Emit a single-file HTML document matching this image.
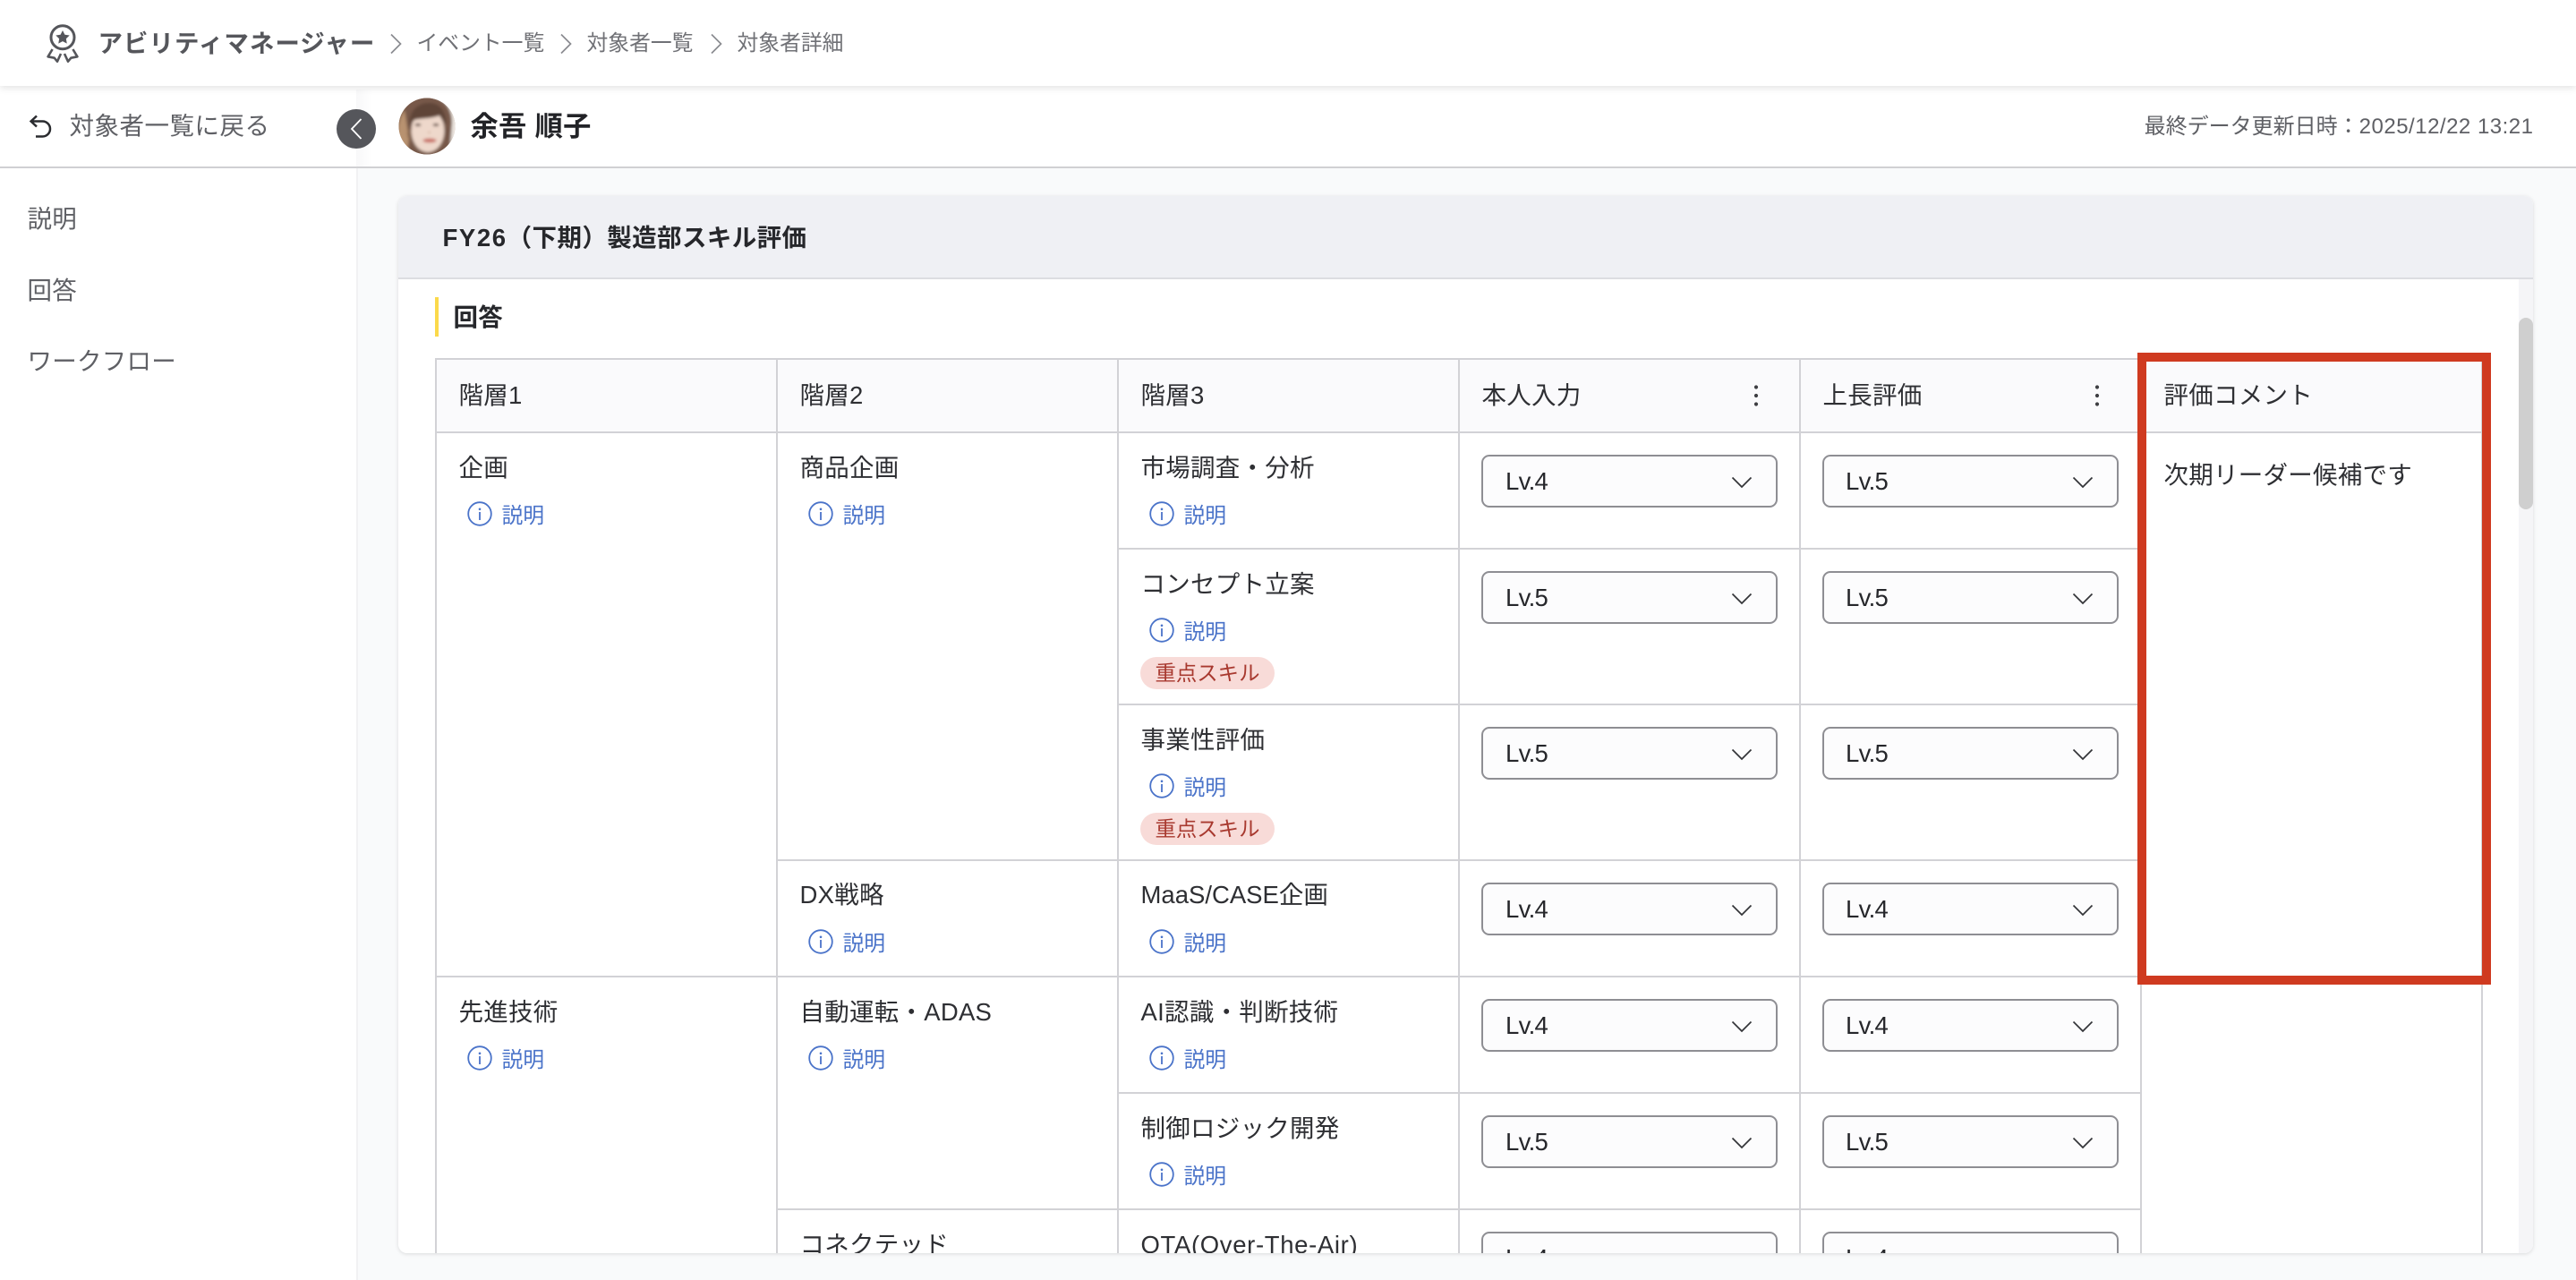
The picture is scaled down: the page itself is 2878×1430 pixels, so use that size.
<!DOCTYPE html>
<html lang="ja">
<head>
<meta charset="utf-8">
<title>対象者詳細</title>
<style>
*{box-sizing:border-box}
html,body{margin:0;padding:0}
body{width:2878px;height:1430px;overflow:hidden;position:relative;background:#f9fafb;font-family:"Liberation Sans","Noto Sans CJK JP",sans-serif;color:#2b2c30}
.t{position:absolute;white-space:nowrap;line-height:40px;height:40px;font-size:27.5px;letter-spacing:.25px;margin-left:-.5px;color:#2e2f33}
.g{color:#5f6065}
.b{font-weight:700}
.c{font-size:23.8px;letter-spacing:0;color:#707176}
.a{position:absolute}
.h{position:absolute;height:2px;background:#d2d2d6}
.v{position:absolute;width:2px;background:#d2d2d6}
.d{font-size:23.8px;letter-spacing:0;color:#4a73c9}
.tag{position:absolute;width:150px;height:36px;border-radius:18px;background:#f8dbd8;color:#a8392f;font-size:23.4px;line-height:36px;text-align:center;white-space:nowrap}
.sel{position:absolute;width:331px;height:59px;border:2px solid #8e8e93;border-radius:9px;background:#fcfcfd;font-size:27.5px;letter-spacing:-.7px;line-height:55px;padding-left:25px;color:#26272b}
.sel.r{padding-left:24px}
.sel svg{position:absolute;left:277px;top:22px}
svg{display:block}
</style>
</head>
<body>
<svg width="0" height="0" style="position:absolute">
<symbol id="i" viewBox="0 0 28 28"><circle cx="14" cy="14" r="12.8" fill="none" stroke="#4a73c9" stroke-width="1.8"/><circle cx="14" cy="8.8" r="1.3" fill="#4a73c9"/><rect x="13.1" y="12" width="1.8" height="9" fill="#4a73c9"/></symbol>
<symbol id="dn" viewBox="0 0 24 14"><path d="M1.5 1.5 L12 12 L22.5 1.5" fill="none" stroke="#333438" stroke-width="1.7"/></symbol>
<symbol id="k" viewBox="0 0 8 26"><circle cx="4" cy="3.5" r="2.1" fill="#3d3e42"/><circle cx="4" cy="13" r="2.1" fill="#3d3e42"/><circle cx="4" cy="22.5" r="2.1" fill="#3d3e42"/></symbol>
<symbol id="cv" viewBox="0 0 14 24"><path d="M2 1.5 L12.5 12 L2 22.5" fill="none" stroke="#8a8b90" stroke-width="1.7"/></symbol>
</svg>

<!-- sidebar -->
<div class="a" style="left:0;top:188px;width:400px;height:1242px;background:#fff;border-right:2px solid #f1f1f3"></div>
<div class="t g" style="left:31px;top:225px">説明</div>
<div class="t g" style="left:31px;top:305px">回答</div>
<div class="t g" style="left:31px;top:384px">ワークフロー</div>

<!-- sub header -->
<div class="a" style="left:0;top:96px;width:2878px;height:92px;background:#fff;border-bottom:2px solid #d0d0d3"></div>
<div class="a" style="left:398px;top:100px;width:18px;height:86px;background:linear-gradient(90deg,#f8f8f9,#fff)"></div>
<svg class="a" style="left:30px;top:126px" width="32" height="30" viewBox="30 126 32 30"><path d="M41 129.5 L34.6 135.5 L41 141.5 M34.6 135.5 H47.5 a8.5 8.5 0 0 1 0 17 H40" fill="none" stroke="#2a2b2f" stroke-width="2.5"/></svg>
<div class="t g" style="left:78px;top:121px;letter-spacing:.5px">対象者一覧に戻る</div>
<div class="a" style="left:376px;top:122px;width:44px;height:44px;border-radius:50%;background:#55565b"></div>
<svg class="a" style="left:390px;top:131px" width="16" height="26" viewBox="0 0 16 26"><path d="M13.5 2 L3 13 L13.5 24" fill="none" stroke="#fff" stroke-width="1.8"/></svg>
<svg class="a" style="left:445px;top:109px" width="64" height="64" viewBox="0 0 64 64">
<defs><clipPath id="av"><circle cx="32" cy="32" r="31.5"/></clipPath><filter id="bl" x="-20%" y="-20%" width="140%" height="140%"><feGaussianBlur stdDeviation="1.6"/></filter></defs>
<g clip-path="url(#av)"><rect width="64" height="64" fill="#b3937f"/><g filter="url(#bl)">
<rect x="-2" y="-2" width="68" height="68" fill="#ece6e0"/>
<path d="M-2 66 V24 C0 4 18 -3 33 -2 C50 -1 60 10 60 28 L58 54 L48 66 Z" fill="#77594a"/>
<path d="M-1 56 C-2 34 1 22 7 14 L12 46 L10 62 Z" fill="#b8926f"/>
<path d="M46 66 L60 52 L62 66 Z" fill="#3a2c28"/>
<ellipse cx="33" cy="37" rx="18.5" ry="24" fill="#eed8cb"/>
<path d="M12 30 C13 12 24 6 35 6 C46 6 53 14 54 30 C50 26 48 24 46 20 C36 24 22 23 18 25 C15 27 13 32 12 36 Z" fill="#5f4437"/>
<path d="M15 32 L13 52 L10 40 Z" fill="#80604c"/><path d="M51 30 L54 50 L56 36 Z" fill="#6e5142"/>
<ellipse cx="22" cy="30.5" rx="3.4" ry="1.5" fill="#5a4034"/><ellipse cx="42" cy="30.5" rx="3.4" ry="1.5" fill="#5a4034"/>
<path d="M33 39 l3 0" stroke="#d8b6a4" stroke-width="2"/>
<ellipse cx="35" cy="48" rx="7.5" ry="2.4" fill="#c96f66"/>
</g></g></svg>
<div class="t b" style="left:526px;top:122px;font-size:31.2px;letter-spacing:.35px;color:#222327">余吾 順子</div>
<div class="t" style="right:47.5px;top:122px;font-size:24px;letter-spacing:0;color:#5f6065">最終データ更新日時：<span style="letter-spacing:.5px">2025/12/22 13:21</span></div>

<!-- top header -->
<div class="a" style="left:0;top:0;width:2878px;height:96px;background:#fff;box-shadow:0 2px 8px rgba(0,0,0,.12)"></div>
<svg class="a" style="left:50px;top:24px" width="40" height="46" viewBox="50 24 40 46"><circle cx="70" cy="41.7" r="13" fill="none" stroke="#55565b" stroke-width="3"/><path d="M70 34 l2.4 4.8 5.3 .75 -3.85 3.75 .9 5.3 -4.75 -2.5 -4.75 2.5 .9 -5.3 -3.85 -3.75 5.3 -.75z" fill="#55565b"/><path d="M58.6 55 L53.6 63.3 L60.7 64.7 L64 68.7 L68 60 M81.4 55 L86.4 63.3 L79.3 64.7 L76 68.7 L72 60" fill="none" stroke="#55565b" stroke-width="2.6" stroke-linejoin="round"/></svg>
<div class="t b" style="left:110px;top:29px;letter-spacing:1px;color:#55565b">アビリティマネージャー</div>
<svg class="a" style="left:435px;top:37px" width="14" height="24"><use href="#cv"/></svg>
<div class="t c" style="left:466px;top:29px">イベント一覧</div>
<svg class="a" style="left:625px;top:37px" width="14" height="24"><use href="#cv"/></svg>
<div class="t c" style="left:656px;top:29px">対象者一覧</div>
<svg class="a" style="left:793px;top:37px" width="14" height="24"><use href="#cv"/></svg>
<div class="t c" style="left:824px;top:29px">対象者詳細</div>

<!-- card -->
<div class="a" style="left:445px;top:219px;width:2385px;height:1181px;border-radius:10px;box-shadow:0 1px 5px rgba(0,0,0,.13)"></div>
<div class="a" style="left:445px;top:219px;width:2385px;height:1181px;border-radius:10px;overflow:hidden;background:#fff">
<div class="a" style="left:-445px;top:-219px;width:2878px;height:1430px">
<div class="a" style="left:445px;top:219px;width:2385px;height:93px;background:#eff0f4;border-bottom:2px solid #dcdde1"></div>
<div class="t b" style="left:495px;top:246px;letter-spacing:.4px;color:#26272b"><span style="letter-spacing:1.6px">FY26</span>（下期）製造部スキル評価</div>
<div class="a" style="left:2814px;top:312px;width:16px;height:1090px;background:#f5f5f7"></div>
<div class="a" style="left:2814px;top:355px;width:16px;height:214px;border-radius:8px;background:#cfcfcf"></div>
<div class="a" style="left:486px;top:332px;width:4px;height:44px;background:#fbd94a"></div>
<div class="t b" style="left:507px;top:335px;color:#26272b">回答</div>

<div class="a" style="left:486px;top:400px;width:2288px;height:84px;background:#fafafc"></div>

<!-- horizontal lines -->
<div class="h" style="left:486px;top:400px;width:2288px"></div>
<div class="h" style="left:486px;top:482px;width:2288px"></div>
<div class="h" style="left:1248px;top:612px;width:1144px"></div>
<div class="h" style="left:1248px;top:786px;width:1144px"></div>
<div class="h" style="left:867px;top:960px;width:1525px"></div>
<div class="h" style="left:486px;top:1090px;width:1906px"></div>
<div class="h" style="left:1248px;top:1220px;width:1144px"></div>
<div class="h" style="left:867px;top:1350px;width:1525px"></div>
<!-- vertical lines -->
<div class="v" style="left:486px;top:400px;height:1000px"></div>
<div class="v" style="left:867px;top:400px;height:1000px"></div>
<div class="v" style="left:1248px;top:400px;height:1000px"></div>
<div class="v" style="left:1629px;top:400px;height:1000px"></div>
<div class="v" style="left:2010px;top:400px;height:1000px"></div>
<div class="v" style="left:2391px;top:400px;height:1000px"></div>
<div class="v" style="left:2772px;top:400px;height:1000px"></div>

<!-- header cells -->
<div class="t" style="left:513px;top:422px">階層1</div>
<div class="t" style="left:894px;top:422px">階層2</div>
<div class="t" style="left:1275px;top:422px">階層3</div>
<div class="t" style="left:1656px;top:422px">本人入力</div>
<svg class="a" style="left:1958px;top:429px" width="8" height="26"><use href="#k"/></svg>
<div class="t" style="left:2037px;top:422px">上長評価</div>
<svg class="a" style="left:2339px;top:429px" width="8" height="26"><use href="#k"/></svg>
<div class="t" style="left:2418px;top:422px">評価コメント</div>
<div class="t" style="left:2418px;top:511px">次期リーダー候補です</div>

<!-- col1 -->
<div class="t" style="left:513px;top:503px">企画</div>
<svg class="a" style="left:522px;top:560px" width="28" height="28"><use href="#i"/></svg><div class="t d" style="left:561px;top:557px">説明</div>
<div class="t" style="left:513px;top:1111px">先進技術</div>
<svg class="a" style="left:522px;top:1168px" width="28" height="28"><use href="#i"/></svg><div class="t d" style="left:561px;top:1165px">説明</div>

<!-- col2 -->
<div class="t" style="left:894px;top:503px">商品企画</div>
<svg class="a" style="left:903px;top:560px" width="28" height="28"><use href="#i"/></svg><div class="t d" style="left:942px;top:557px">説明</div>
<div class="t" style="left:894px;top:980px">DX戦略</div>
<svg class="a" style="left:903px;top:1038px" width="28" height="28"><use href="#i"/></svg><div class="t d" style="left:942px;top:1035px">説明</div>
<div class="t" style="left:894px;top:1111px">自動運転・ADAS</div>
<svg class="a" style="left:903px;top:1168px" width="28" height="28"><use href="#i"/></svg><div class="t d" style="left:942px;top:1165px">説明</div>
<div class="t" style="left:894px;top:1371px">コネクテッド</div>

<!-- col3 -->
<div class="t" style="left:1275px;top:503px">市場調査・分析</div>
<svg class="a" style="left:1284px;top:560px" width="28" height="28"><use href="#i"/></svg><div class="t d" style="left:1323px;top:557px">説明</div>
<div class="t" style="left:1275px;top:633px">コンセプト立案</div>
<svg class="a" style="left:1284px;top:690px" width="28" height="28"><use href="#i"/></svg><div class="t d" style="left:1323px;top:687px">説明</div>
<div class="tag" style="left:1274px;top:734px">重点スキル</div>
<div class="t" style="left:1275px;top:807px">事業性評価</div>
<svg class="a" style="left:1284px;top:864px" width="28" height="28"><use href="#i"/></svg><div class="t d" style="left:1323px;top:861px">説明</div>
<div class="tag" style="left:1274px;top:908px">重点スキル</div>
<div class="t" style="left:1275px;top:980px;letter-spacing:0">MaaS/CASE企画</div>
<svg class="a" style="left:1284px;top:1038px" width="28" height="28"><use href="#i"/></svg><div class="t d" style="left:1323px;top:1035px">説明</div>
<div class="t" style="left:1275px;top:1111px">AI認識・判断技術</div>
<svg class="a" style="left:1284px;top:1168px" width="28" height="28"><use href="#i"/></svg><div class="t d" style="left:1323px;top:1165px">説明</div>
<div class="t" style="left:1275px;top:1241px">制御ロジック開発</div>
<svg class="a" style="left:1284px;top:1298px" width="28" height="28"><use href="#i"/></svg><div class="t d" style="left:1323px;top:1295px">説明</div>
<div class="t" style="left:1275px;top:1371px;letter-spacing:.65px">OTA(Over-The-Air)</div>

<!-- selects -->
<div class="sel" style="left:1655px;top:508px">Lv.4<svg width="24" height="14"><use href="#dn"/></svg></div>
<div class="sel r" style="left:2036px;top:508px">Lv.5<svg width="24" height="14"><use href="#dn"/></svg></div>
<div class="sel" style="left:1655px;top:638px">Lv.5<svg width="24" height="14"><use href="#dn"/></svg></div>
<div class="sel r" style="left:2036px;top:638px">Lv.5<svg width="24" height="14"><use href="#dn"/></svg></div>
<div class="sel" style="left:1655px;top:812px">Lv.5<svg width="24" height="14"><use href="#dn"/></svg></div>
<div class="sel r" style="left:2036px;top:812px">Lv.5<svg width="24" height="14"><use href="#dn"/></svg></div>
<div class="sel" style="left:1655px;top:986px">Lv.4<svg width="24" height="14"><use href="#dn"/></svg></div>
<div class="sel r" style="left:2036px;top:986px">Lv.4<svg width="24" height="14"><use href="#dn"/></svg></div>
<div class="sel" style="left:1655px;top:1116px">Lv.4<svg width="24" height="14"><use href="#dn"/></svg></div>
<div class="sel r" style="left:2036px;top:1116px">Lv.4<svg width="24" height="14"><use href="#dn"/></svg></div>
<div class="sel" style="left:1655px;top:1246px">Lv.5<svg width="24" height="14"><use href="#dn"/></svg></div>
<div class="sel r" style="left:2036px;top:1246px">Lv.5<svg width="24" height="14"><use href="#dn"/></svg></div>
<div class="sel" style="left:1655px;top:1376px">Lv.4<svg width="24" height="14"><use href="#dn"/></svg></div>
<div class="sel r" style="left:2036px;top:1376px">Lv.4<svg width="24" height="14"><use href="#dn"/></svg></div>

<!-- red highlight -->
<div class="a" style="left:2388px;top:394px;width:395px;height:706px;border:10px solid #cf3a20"></div>
</div>
</div>
</body>
</html>
